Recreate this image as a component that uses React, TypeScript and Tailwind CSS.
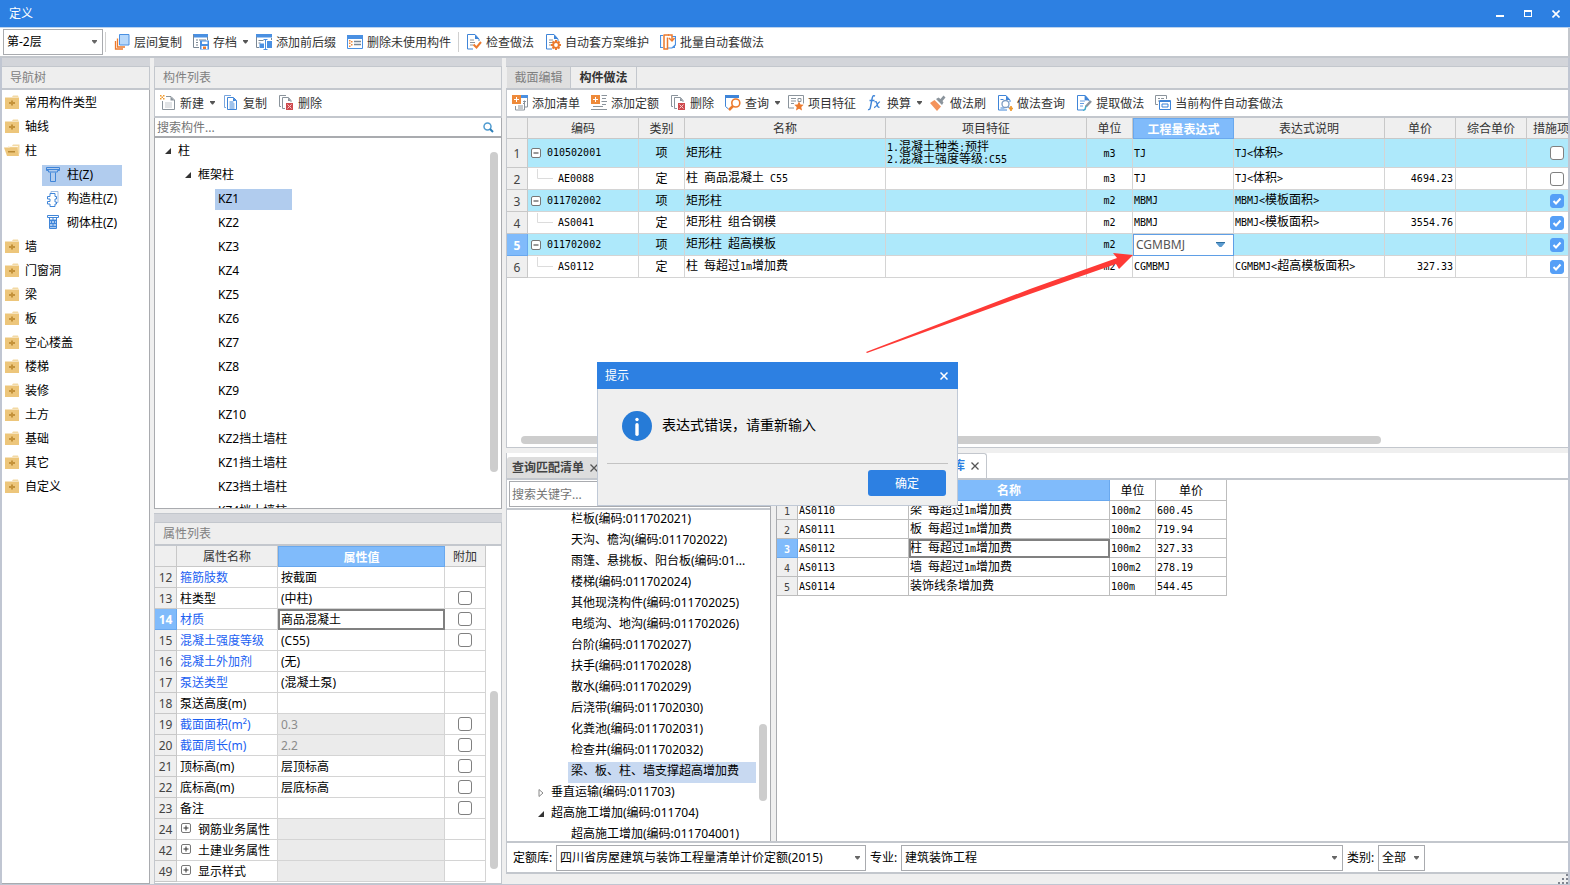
import React from "react";

type Kids = { children?: React.ReactNode };

/* ---------- icons ---------- */

const Svg = ({ children, w = 16, h = 16 }: Kids & { w?: number; h?: number }) => (
  <svg width={w} height={h} viewBox={`0 0 ${w} ${h}`} fill="none" className="shrink-0" aria-hidden="true">
    {children}
  </svg>
);

const Caret = ({ color = "#555" }: { color?: string }) => (
  <svg width="5" height="4" viewBox="0 0 5 4" className="shrink-0" aria-hidden="true">
    <path d="M0 0h5v1L3 3.5H2L0 1z" fill={color} />
  </svg>
);

const FolderClosed = () => (
  <Svg>
    <path d="M8 2 9 .500h5L14.500 2z" fill="#f3d9a3" />
    <path d="M1 2.500h14V14H1z" fill="#edc67b" />
    <path d="M7 5.500h2V7h2v2H9v1.500H7V9H5V7h2z" fill="#c4923a" />
  </Svg>
);

const FolderOpen = () => (
  <Svg>
    <path d="M4 3h4l1-1.500h6.500V10l-1 2z" fill="#f3d9a3" />
    <path d="M5 3h9v1H5z" fill="#fff7e6" />
    <path d="M0 4.500h13L15 13H3z" fill="#edc67b" />
    <path d="M4 8h7v1.500H4z" fill="#b98a35" />
  </Svg>
);

const ColumnIcon = () => (
  <Svg>
    <path d="M1.500.500h13v3h-2v1.500h-9V3.500h-2zM1.500 2.500h13M5.500 5.500v9h5v-9" stroke="#3f85d8" />
  </Svg>
);

const StructColumnIcon = () => (
  <Svg>
    <path d="M6 2.500V.500h7v11h-1" stroke="#9dbbe3" />
    <path d="M5 2.500h5V5.500h1.500v2.500H10V11h1.500v2H10v2.500H5V13H2.500v-2.500H5V8H2.500V5.500H5z" stroke="#3f85d8" />
  </Svg>
);

const BrickColumnIcon = () => (
  <Svg>
    <path d="M4 4h8v9H4z" fill="#a9c8f0" />
    <path d="M2.500.500h11v2h-11zM4.500 3v10.500h7V3M5 5.500h6M5 8.500h6M5 11.500h6M8 3v2M6.500 6v2M9.500 6v2M8 9v2" stroke="#3f85d8" />
  </Svg>
);

const CopyFloors = () => (
  <Svg>
    <path d="M1.500 7v8H9M3.500 4.500V13H11" stroke="#ec7a2e" strokeWidth="1.300" />
    <path d="M5.500.500h9.500v10.500H5.500z" fill="#b7d8fb" stroke="#4a90e2" />
  </Svg>
);

const Archive = () => (
  <Svg>
    <path d="M0 0h15v3.500H0z" fill="#4a90e2" />
    <path d="M.500 1v12.500H6M14.500 3v3M3 6h2M6 6h7M3 8.500h2M3 11h2" stroke="#7a8794" />
    <path d="M7 6.500h9v9H7z" fill="#4a90e2" />
    <path d="M9 7.500h5.500V10H9z" fill="#fff" />
    <path d="M8.500 12h6v3h-6z" fill="#fff" />
    <path d="M10 12.500h3V15h-3z" fill="#ec7a2e" />
  </Svg>
);

const Affix = () => (
  <Svg>
    <path d="M0 0h16v3.500H0z" fill="#4a90e2" />
    <path d="M.500 3v10.500H3M2.500 6.500h5M2.500 9h2M15.500 4v2" stroke="#7a8794" />
    <path d="M3.500 9.500H8V14H3.500zM11 7h5v7h-5z" fill="#4a90e2" />
    <path d="M7.500 5.500h4M9.500 5.500v10M7.500 15.500h4" stroke="#4a90e2" />
  </Svg>
);

const RemoveUnused = () => (
  <Svg>
    <path d="M.500 1.500h15v13H.500z" stroke="#4a90e2" />
    <path d="M0 1h16v4H0z" fill="#4a90e2" />
    <path d="M2 6h1.500v1.500H2zM4 7h1.500v1.500H4zM2 8.500h1.500V10H2zM4 10h1.500v1.500H4zM2 11.500h1.500V13H2z" fill="#ee8a3a" />
    <path d="M7 7.500h7M7 10.500h7" stroke="#7a8794" strokeWidth="1.300" />
  </Svg>
);

const DocBase = () => (
  <>
    <path d="M13 7V5L9 .500H1.500v14.500H7" stroke="#3f85d8" />
    <path d="M9 .500V5h4z" fill="#3f85d8" />
    <path d="M4 6h4M4 8.500h5M4 11h3" stroke="#8b949c" />
  </>
);

const CheckDoc = () => (
  <Svg>
    <DocBase />
    <path d="m7.500 10.500 3 3L15 8" stroke="#ec7a2e" strokeWidth="2" />
  </Svg>
);

const GearDoc = () => (
  <Svg>
    <DocBase />
    <path d="M11 6v10M6 11h10M7.500 7.500l7 7M14.500 7.500l-7 7" stroke="#ec7a2e" strokeWidth="2" />
    <circle cx="11" cy="11" r="3.800" fill="#ec7a2e" />
    <circle cx="11" cy="11" r="1.900" fill="#fff" />
  </Svg>
);

const BatchDocs = () => (
  <Svg>
    <path d="M3 1.500H.500v12H3M12 2.500h3.500v8.500L12 14H8" stroke="#4a90e2" strokeWidth="1.200" />
    <path d="M15 10.500V14h-3.500z" fill="#4a90e2" />
    <path d="M4 1h5M4 .500v14.500h3.500V3.500" stroke="#ec7a2e" strokeWidth="1.500" />
    <path d="M8 1h4v4.500M9 4l3 3 2.500-3" stroke="#ec7a2e" strokeWidth="1.500" />
  </Svg>
);

const NewDoc = () => (
  <Svg>
    <path d="M6 1.500h5l3.500 3.500v9.500h-12V6" stroke="#8b949c" />
    <path d="M10.500 1.500V5.500h4z" fill="#8b949c" />
    <path d="M5 8h7M5 10h7M5 12h7" stroke="#c3c8cd" />
    <path d="M0 0h1.500v1.500H0zM3 0h1.500v1.500H3zM1.500 1.500H3V3H1.500zM0 3h1.500v1.500H0zM3 3h1.500v1.500H3z" fill="#f09a2e" />
  </Svg>
);

const CopyDocs = () => (
  <Svg>
    <path d="M3 12.500H1.500v-12H8" stroke="#7aa6de" />
    <path d="M4.500 2.500h6l3 3v9h-9zM6.500 7h4M6.500 9h5M6.500 11h5M6.500 13h5" stroke="#3f85d8" />
    <path d="M10 2.500V6h3.500z" fill="#3f85d8" />
  </Svg>
);

const DeleteDocs = () => (
  <Svg>
    <path d="M3 11.500H1.500v-11H8M7 13.500H4.500v-11h6l2.500 3V7" stroke="#8b949c" />
    <path d="M10 2.500V6h3z" fill="#8b949c" />
    <path d="M8 8h7v7H8z" fill="#cf4a4e" />
    <path d="m9.500 9.500 4 4M13.500 9.500l-4 4" stroke="#f6cdce" />
  </Svg>
);

const AddList = () => (
  <Svg>
    <path d="M9 0h7v3H9z" fill="#4a90e2" />
    <path d="M15.500 3v9H13M12.500 5.500v9.500H3.500V11M11 6.500h3M11 8.500h1.500M6 11h5M6 13h5" stroke="#8b949c" />
    <path d="M0 0h9v9H0z" fill="#ee8a3a" />
    <path d="M4.500 2v5M2 4.500h5" stroke="#fff" />
  </Svg>
);

const AddQuota = () => (
  <Svg>
    <path d="M10.500.500h5.500M11 3.500h4M10.500 6.500h5.500M11 9.500h4M2 11.500h10M0 14.500h16" stroke="#8b949c" />
    <path d="M0 0h9v9H0z" fill="#ee8a3a" />
    <path d="M4.500 2v5M2 4.500h5" stroke="#fff" />
  </Svg>
);

const Query = () => (
  <Svg>
    <path d="M.500 0v11.500l3 2.500" stroke="#3f85d8" />
    <path d="M0 0h14v3H0z" fill="#3f85d8" />
    <circle cx="10.800" cy="8" r="4" stroke="#ec7a2e" strokeWidth="1.600" />
    <path d="m8 11-4 4" stroke="#ec7a2e" strokeWidth="2.500" />
  </Svg>
);

const Feature = () => (
  <Svg>
    <path d="M.500.500h15v8M.500.500v12.500H6M3 3.500h5M3 6h5M3 8.500h3M10 3.500h3v3h-3z" stroke="#8b949c" />
    <path d="m11 6.500 1.500 3 3.200.3-2.400 2.200.7 3.500-3-1.700-3 1.700.7-3.500-2.400-2.200 3.200-.3z" fill="#ec7a2e" />
  </Svg>
);

const Fx = () => (
  <Svg>
    <path d="M8 1C6 0 5.500 1.500 5 4L3.500 12c-.5 2.500-1 3-2.500 2.500M2.500 5.500h5" stroke="#3f85d8" strokeWidth="1.400" />
    <path d="M7.500 7c2-1 2 0 2.500 2s1 4 2.500 3M13 7c-2-.5-3.500 6-6 5.500" stroke="#3f85d8" strokeWidth="1.300" />
  </Svg>
);

const Brush = () => (
  <Svg>
    <path d="m0 8 4.500-3 6.500 6.500L7 16z" fill="#f4935c" />
    <path d="m5 4 7 7" stroke="#fff" />
    <path d="M6 4 8.500 2.500l2 1.500L13.500.500l2 2-3 3.500 1 1.500-1.500 2.500z" fill="#8b949c" />
  </Svg>
);

const MethodQuery = () => (
  <Svg>
    <path d="M13 7V5L9 .500H1.500v14.500H10M3.500 4.500h3M3.500 13h4" stroke="#3f85d8" />
    <path d="M9 .500V5h4z" fill="#3f85d8" />
    <circle cx="8.500" cy="9" r="3.500" stroke="#7d9cc4" strokeWidth="1.300" />
    <path d="m11 11.500 1.500 1.500" stroke="#7d9cc4" strokeWidth="1.500" />
    <path d="m14 11 .7 1.800 1.300.7-1.300.7L14 16l-.7-1.800-1.300-.7 1.300-.7z" fill="#f09a2e" stroke="#f09a2e" />
  </Svg>
);

const Extract = () => (
  <Svg>
    <path d="M13 6V5L9 .500H1.500v14.500H7" stroke="#3f85d8" />
    <path d="M9 .500V5h4zM4 6h5M4 8.500h4M4 11h3" fill="#3f85d8" stroke="#3f85d8" strokeWidth=".8" />
    <path d="m15 6-5 5.500" stroke="#8b949c" strokeWidth="2.500" />
    <path d="m10 11-1 3.500-2 1" stroke="#3fa9c9" strokeWidth="1.500" />
  </Svg>
);

const AutoApply = () => (
  <Svg>
    <path d="M3 9.500H.500V.500h11V4M3 3.500h2M6 3.500h3M3 6h1" stroke="#8b949c" />
    <path d="M4.500 5.500h11v9h-11z" fill="#fff" stroke="#3f85d8" />
    <path d="M5 6.500h10M7 9h6v3H7z" stroke="#3f85d8" />
  </Svg>
);

const SearchIcon = () => (
  <Svg w={12} h={12}>
    <circle cx="5.500" cy="5.500" r="3.500" stroke="#4f9bd0" strokeWidth="1.500" />
    <path d="m8 8 3 3" stroke="#2d7fb8" strokeWidth="2" />
  </Svg>
);

const TreeOpen = () => (
  <Svg w={8} h={8}>
    <path d="M7 1v6H1z" fill="#333" />
  </Svg>
);

const TreeClosed = () => (
  <Svg w={8} h={10}>
    <path d="M2 1.500v7L6 5z" stroke="#888" />
  </Svg>
);

const Cross = ({ size = 8, color = "#fff", weight = 1.5 }: { size?: number; color?: string; weight?: number }) => (
  <svg width={size} height={size} viewBox="0 0 8 8" fill="none" aria-hidden="true">
    <path d="m.5.5 7 7m0-7-7 7" stroke={color} strokeWidth={weight} />
  </svg>
);

const ExpandBox = ({ plus = false }: { plus?: boolean }) => (
  <Svg w={12} h={12}>
    <rect x="1.500" y="1.500" width="9" height="9" rx="1.500" fill="#fff" stroke="#777" />
    <path d={plus ? "M3.500 6h5M6 3.500v5" : "M3.500 6h5"} stroke="#333" />
  </Svg>
);

/* ---------- shared parts ---------- */

const ToolButton = ({ icon, label, menu = false }: { icon: React.ReactNode; label: string; menu?: boolean }) => (
  <button type="button" className={`flex h-6 shrink-0 items-center pl-[5px] text-[#333] ${menu ? "pr-0.5" : "pr-[5px]"}`}>
    <span className="flex w-5 shrink-0">{icon}</span>
    <span className="pt-0.5 whitespace-nowrap">{label}</span>
    {menu && (
      <span className="ml-1.5">
        <Caret />
      </span>
    )}
  </button>
);

const PaneTop = ({ children, sides = "" }: Kids & { sides?: string }) => (
  <>
    <div className="h-2 shrink-0 bg-[#d3d5da]" />
    <div className={`flex h-6 shrink-0 border-t border-b-2 border-[#c3c7cd] bg-[#eeeeee] ${sides}`}>{children}</div>
  </>
);

const PaneTitle = ({ children }: Kids) => <h2 className="px-2 pt-px leading-5 text-[#808080]">{children}</h2>;

const Tick = ({ label, checked = false }: { label: string; checked?: boolean }) => (
  <span className="relative mx-auto flex w-3.5">
    <input
      type="checkbox"
      aria-label={label}
      defaultChecked={checked}
      className="peer h-3.5 w-3.5 appearance-none rounded-[3px] border border-[#808080] bg-white checked:border-[#559ff7] checked:bg-[#559ff7]"
    />
    <svg viewBox="0 0 14 14" className="pointer-events-none absolute inset-0 hidden h-3.5 w-3.5 peer-checked:block" fill="none" aria-hidden="true">
      <path d="m3.500 7 2.500 2.500L10.500 4.500" stroke="#fff" strokeWidth="2" />
    </svg>
  </span>
);

/* Grid text: half-width characters sit on a six pixel pitch beside twelve pixel ideographs. */
const GridText = ({ children }: { children: string }) => (
  <>
    {children.split(/([\x20-\x7e]+)/).map((run, i) =>
      i % 2 ? (
        <span key={i} className="font-['DejaVu_Sans_Mono',monospace] text-[10px] whitespace-pre">
          {run}
        </span>
      ) : (
        run
      ),
    )}
  </>
);

const Dropdown = ({ id, value, className }: { id: string; value: string; className: string }) => (
  <span className={`relative flex h-[26px] ${className}`}>
    <select id={id} aria-label={value} className="w-full appearance-none border border-[#a9abaf] bg-white pr-4 pl-[3px] text-black">
      <option>{value}</option>
    </select>
    <span className="pointer-events-none absolute inset-y-0 right-1.5 flex items-center">
      <Caret color="#666" />
    </span>
  </span>
);

/* ---------- navigation ---------- */

const navAfter = ["墙", "门窗洞", "梁", "板", "空心楼盖", "楼梯", "装修", "土方", "基础", "其它", "自定义"];

const NavRow = ({ label, open = false }: { label: string; open?: boolean }) => (
  <li className="flex h-6 items-center pl-0.5">
    <span className="flex w-[21px]">{open ? <FolderOpen /> : <FolderClosed />}</span>
    {label}
  </li>
);

const NavChild = ({ label, icon, active = false }: { label: string; icon: React.ReactNode; active?: boolean }) => (
  <li className="flex h-6 items-center pl-10">
    <span className={`flex h-[21px] w-20 items-center pl-[3px] whitespace-nowrap ${active ? "bg-[#b1ccee]" : ""}`}>
      <span className="flex w-[22px] shrink-0">{icon}</span>
      {label}
    </span>
  </li>
);

const NavPane = () => (
  <nav className="flex w-[148px] shrink-0 flex-col">
    <PaneTop sides="border-r">
      <PaneTitle>导航树</PaneTitle>
    </PaneTop>
    <ul className="flex-1 border-r border-b border-[#a9abaf] bg-white pt-px">
      <NavRow label="常用构件类型" />
      <NavRow label="轴线" />
      <NavRow label="柱" open />
      <NavChild label="柱(Z)" icon={<ColumnIcon />} active />
      <NavChild label="构造柱(Z)" icon={<StructColumnIcon />} />
      <NavChild label="砌体柱(Z)" icon={<BrickColumnIcon />} />
      {navAfter.map((label) => (
        <NavRow key={label} label={label} />
      ))}
    </ul>
  </nav>
);

/* ---------- component list and properties ---------- */

const components = ["KZ1", "KZ2", "KZ3", "KZ4", "KZ5", "KZ6", "KZ7", "KZ8", "KZ9", "KZ10", "KZ2挡土墙柱", "KZ1挡土墙柱", "KZ3挡土墙柱", "KZ4挡土墙柱"];

const ComponentPane = () => (
  <section className="flex min-h-0 flex-1 flex-col">
    <PaneTop sides="border-x">
      <PaneTitle>构件列表</PaneTitle>
    </PaneTop>
    <div className="flex h-7 shrink-0 items-center gap-px border-x border-b-2 border-[#c3c7cd] bg-white">
      <ToolButton icon={<NewDoc />} label="新建" menu />
      <ToolButton icon={<CopyDocs />} label="复制" />
      <ToolButton icon={<DeleteDocs />} label="删除" />
    </div>
    <div className="flex h-5 shrink-0 items-center border-x border-b-2 border-[#a9abaf] bg-white pr-[7px]">
      <input aria-label="搜索构件" placeholder="搜索构件..." className="min-w-0 flex-1 pt-0.5 pl-0.5 outline-none placeholder:text-[#757575]" />
      <SearchIcon />
    </div>
    <div className="flex min-h-0 flex-1 overflow-hidden border-x border-b border-[#a9abaf] bg-white">
      <ul className="flex-1 pt-px">
        <li className="flex h-6 items-center pl-[9px]">
          <span className="flex w-[14px]">
            <TreeOpen />
          </span>
          柱
        </li>
        <li className="flex h-6 items-center pl-[29px]">
          <span className="flex w-[14px]">
            <TreeOpen />
          </span>
          框架柱
        </li>
        {components.map((name, i) => (
          <li key={name} className="flex h-6 items-center pl-[60px]">
            <span className={`h-[21px] w-[77px] pl-[3px] leading-5 whitespace-nowrap ${i === 0 ? "bg-[#b1ccee]" : ""}`}>{name}</span>
          </li>
        ))}
      </ul>
      <div className="w-[11px] pt-3.5">
        <div className="h-80 w-2 rounded-full bg-[#cdcdcd]" />
      </div>
    </div>
  </section>
);

type Prop = { n: number; name: string; value?: string; blue?: boolean; tick?: boolean; grey?: boolean; group?: boolean; active?: boolean };

const props: Prop[] = [
  { n: 12, name: "箍筋肢数", value: "按截面", blue: true },
  { n: 13, name: "柱类型", value: "(中柱)", tick: true },
  { n: 14, name: "材质", value: "商品混凝土", blue: true, tick: true, active: true },
  { n: 15, name: "混凝土强度等级", value: "(C55)", blue: true, tick: true },
  { n: 16, name: "混凝土外加剂", value: "(无)", blue: true },
  { n: 17, name: "泵送类型", value: "(混凝土泵)", blue: true },
  { n: 18, name: "泵送高度(m)" },
  { n: 19, name: "截面面积(m²)", value: "0.3", blue: true, tick: true, grey: true },
  { n: 20, name: "截面周长(m)", value: "2.2", blue: true, tick: true, grey: true },
  { n: 21, name: "顶标高(m)", value: "层顶标高", tick: true },
  { n: 22, name: "底标高(m)", value: "层底标高", tick: true },
  { n: 23, name: "备注", tick: true },
  { n: 24, name: "钢筋业务属性", grey: true, group: true },
  { n: 42, name: "土建业务属性", grey: true, group: true },
  { n: 49, name: "显示样式", grey: true, group: true },
];

const PropertyPane = () => (
  <section className="flex shrink-0 flex-col border-t border-[#c3c7cd]">
    <PaneTop sides="border-x">
      <PaneTitle>属性列表</PaneTitle>
    </PaneTop>
    <div className="flex justify-between border-x border-b border-[#c3c7cd] bg-white pb-px">
      <table className="w-[331px] table-fixed border-separate border-spacing-0">
        <colgroup>
          <col className="w-[22px]" />
          <col className="w-[101px]" />
          <col className="w-[167px]" />
          <col className="w-[41px]" />
        </colgroup>
        <thead>
          <tr className="h-[21px]">
            <th className="border-r border-b border-[#c8c8c8] bg-[#efefef] p-0" />
            <th className="border-r border-b border-[#c8c8c8] bg-[#efefef] p-0 pt-0.5 font-normal text-[#333]">属性名称</th>
            <th className="border border-[#69a8ee] bg-[#80bbfb] p-0 pt-0.5 text-white">属性值</th>
            <th className="border-r border-b border-[#c8c8c8] bg-[#efefef] p-0 pt-0.5 font-normal text-[#333]">附加</th>
          </tr>
        </thead>
        <tbody>
          {props.map((p) => (
            <tr key={p.n} className="h-[21px]">
              <td className={`border-r border-b p-0 pt-0.5 text-center ${p.active ? "border-[#69a8ee] bg-[#80bbfb] font-bold text-white" : "border-[#c8c8c8] bg-[#efefef] text-[#444]"}`}>{p.n}</td>
              <td className={`border-r border-b border-[#d4d4d4] p-0 pt-0.5 pl-[3px] whitespace-nowrap ${p.blue ? "text-[#1c5ff2]" : "text-black"}`}>
                {p.group ? (
                  <span className="flex items-start gap-1.5">
                    <ExpandBox plus />
                    {p.name}
                  </span>
                ) : (
                  p.name
                )}
              </td>
              <td
                className={`border-r border-b border-[#d4d4d4] p-0 pt-0.5 pl-[3px] ${p.grey ? "bg-[#ebebeb] text-[#8c8c8c]" : "text-black"} ${p.active ? "outline-2 -outline-offset-2 outline-[#808080]" : ""}`}
              >
                {p.value}
              </td>
              <td className="border-r border-b border-[#d4d4d4] p-0">{p.tick && <Tick label={`${p.name} 附加`} />}</td>
            </tr>
          ))}
        </tbody>
      </table>
      <div className="w-[11px] pt-[145px]">
        <div className="h-[178px] w-2 rounded-full bg-[#cdcdcd]" />
      </div>
    </div>
  </section>
);

/* ---------- bill grid ---------- */

type Bill = { code: string; kind: string; name: string; feature?: string[]; unit: string; expr: string; note?: string; price?: string; on?: boolean };

const bills: Bill[] = [
  { code: "010502001", kind: "项", name: "矩形柱", feature: ["1.混凝土种类:预拌", "2.混凝土强度等级:C55"], unit: "m3", expr: "TJ", note: "TJ<体积>" },
  { code: "AE0088", kind: "定", name: "柱 商品混凝土 C55", unit: "m3", expr: "TJ", note: "TJ<体积>", price: "4694.23" },
  { code: "011702002", kind: "项", name: "矩形柱", unit: "m2", expr: "MBMJ", note: "MBMJ<模板面积>", on: true },
  { code: "AS0041", kind: "定", name: "矩形柱 组合钢模", unit: "m2", expr: "MBMJ", note: "MBMJ<模板面积>", price: "3554.76", on: true },
  { code: "011702002", kind: "项", name: "矩形柱 超高模板", unit: "m2", expr: "CGMBMJ", on: true },
  { code: "AS0112", kind: "定", name: "柱 每超过1m增加费", unit: "m2", expr: "CGMBMJ", note: "CGMBMJ<超高模板面积>", price: "327.33", on: true },
];

const billHeads = ["", "编码", "类别", "名称", "项目特征", "单位", "工程量表达式", "表达式说明", "单价", "综合单价", "措施项目"];
const cell = "border-r border-b border-[#d4d4d4] p-0 px-0.5 whitespace-nowrap leading-4";
const exprCell = "border-r border-b border-[#d4d4d4] p-0 px-px whitespace-nowrap leading-4";

const BillGrid = () => (
  <table className="w-[1081px] table-fixed border-separate border-spacing-0 text-black">
    <colgroup>
      <col className="w-[21px]" />
      <col className="w-[111px]" />
      <col className="w-[46px]" />
      <col className="w-[201px]" />
      <col className="w-[201px]" />
      <col className="w-[46px]" />
      <col className="w-[101px]" />
      <col className="w-[151px]" />
      <col className="w-[71px]" />
      <col className="w-[71px]" />
      <col className="w-[61px]" />
    </colgroup>
    <thead>
      <tr className="h-[21px]">
        {billHeads.map((h, i) => (
          <th key={i} className={`p-0 pt-0.5 ${i === 6 ? "border border-[#69a8ee] bg-[#80bbfb] text-white" : "border-r border-b border-[#c8c8c8] bg-[#efefef] font-normal text-[#333]"}`}>
            {h}
          </th>
        ))}
      </tr>
    </thead>
    <tbody>
      {bills.map((b, i) => {
        const item = b.kind === "项";
        const editing = i === 4;
        return (
          <tr key={i} className={`${i === 0 ? "h-[29px]" : "h-[22px]"} ${item ? "bg-[#aee9fb]" : "bg-white"}`}>
            <td className={`border-r border-b p-0 pt-0.5 text-center ${editing ? "border-[#69a8ee] bg-[#80bbfb] font-bold text-white" : "border-[#c8c8c8] bg-[#efefef] text-[#444]"}`}>{i + 1}</td>
            <td className={cell}>
              {item ? (
                <span className="flex items-center gap-[5px]">
                  <ExpandBox />
                  <GridText>{b.code}</GridText>
                </span>
              ) : (
                <span className="flex items-center gap-1">
                  <svg width="24" height="20" viewBox="0 0 24 20" fill="none" aria-hidden="true">
                    <path d="M7.500 0v9.500H23" stroke="#dcdcdc" />
                  </svg>
                  <GridText>{b.code}</GridText>
                </span>
              )}
            </td>
            <td className={`${cell} text-center`}>{b.kind}</td>
            <td className={exprCell}>
              <GridText>{b.name}</GridText>
            </td>
            <td className={exprCell}>
              {b.feature?.map((line) => (
                <div key={line} className="h-3 leading-3">
                  <GridText>{line}</GridText>
                </div>
              ))}
            </td>
            <td className={`${cell} text-center`}>
              <GridText>{b.unit}</GridText>
            </td>
            {editing ? (
              <td className="p-0">
                <span className="relative flex">
                  <select aria-label="工程量表达式" className="h-[22px] w-full appearance-none border border-[#5f9fe6] bg-white pl-0.5 text-[#555]">
                    <option>{b.expr}</option>
                  </select>
                  <svg width="9" height="6" viewBox="0 0 9 6" className="pointer-events-none absolute top-2 right-[9px]" aria-hidden="true">
                    <path d="M0 0h9v1L5.500 5h-2L0 1z" fill="#5b9bd0" />
                    <path d="M0 0h9v1H0z" fill="#2f6f9f" />
                  </svg>
                </span>
              </td>
            ) : (
              <td className={exprCell}>
                <GridText>{b.expr}</GridText>
              </td>
            )}
            <td className={exprCell}>{b.note && <GridText>{b.note}</GridText>}</td>
            <td className={`${cell} text-right`}>{b.price && <GridText>{b.price}</GridText>}</td>
            <td className={cell} />
            <td className={cell}>
              <Tick label={`${b.code} 措施项目`} checked={b.on} />
            </td>
          </tr>
        );
      })}
    </tbody>
  </table>
);

const MethodPane = () => (
  <section className="flex min-h-0 flex-1 flex-col">
    <PaneTop>
      <div role="tablist" className="flex pl-px leading-5">
        <button type="button" role="tab" className="w-16 border-r border-[#c3c7cd] bg-[#dfdfdf] text-[#808080]">
          截面编辑
        </button>
        <button type="button" role="tab" aria-selected="true" className="w-[66px] border-r border-[#c3c7cd] font-bold text-[#333]">
          构件做法
        </button>
      </div>
    </PaneTop>
    <div className="flex h-7 shrink-0 items-center gap-px border-b-2 border-l border-[#c3c7cd] bg-white">
      <ToolButton icon={<AddList />} label="添加清单" />
      <ToolButton icon={<AddQuota />} label="添加定额" />
      <ToolButton icon={<DeleteDocs />} label="删除" />
      <ToolButton icon={<Query />} label="查询" menu />
      <ToolButton icon={<Feature />} label="项目特征" />
      <ToolButton icon={<Fx />} label="换算" menu />
      <ToolButton icon={<Brush />} label="做法刷" />
      <ToolButton icon={<MethodQuery />} label="做法查询" />
      <ToolButton icon={<Extract />} label="提取做法" />
      <ToolButton icon={<AutoApply />} label="当前构件自动套做法" />
    </div>
    <div className="flex min-h-0 flex-1 flex-col justify-between overflow-hidden border-b border-l border-[#c3c7cd] bg-white pb-[3px]">
      <BillGrid />
      <div className="mr-[187px] ml-3.5 h-2 rounded-full bg-[#cdcdcd]" />
    </div>
  </section>
);

/* ---------- query area ---------- */

const leaves = [
  "栏板(编码:011702021)",
  "天沟、檐沟(编码:011702022)",
  "雨篷、悬挑板、阳台板(编码:01...",
  "楼梯(编码:011702024)",
  "其他现浇构件(编码:011702025)",
  "电缆沟、地沟(编码:011702026)",
  "台阶(编码:011702027)",
  "扶手(编码:011702028)",
  "散水(编码:011702029)",
  "后浇带(编码:011702030)",
  "化粪池(编码:011702031)",
  "检查井(编码:011702032)",
  "梁、板、柱、墙支撑超高增加费",
];

const quotas = [
  ["AS0110", "梁 每超过1m增加费", "100m2", "600.45"],
  ["AS0111", "板 每超过1m增加费", "100m2", "719.94"],
  ["AS0112", "柱 每超过1m增加费", "100m2", "327.33"],
  ["AS0113", "墙 每超过1m增加费", "100m2", "278.19"],
  ["AS0114", "装饰线条增加费", "100m", "544.45"],
];

const ChapterTree = () => (
  <div className="flex w-[264px] shrink-0 flex-col border-r border-[#a9abaf] bg-white">
    <div className="flex h-[30px] shrink-0 border-b-2 border-[#c3c7cd] py-px pl-0.5">
      <input aria-label="搜索关键字" placeholder="搜索关键字..." className="h-[26px] w-full border border-[#a9abaf] pl-0.5 outline-none placeholder:text-[#757575]" />
    </div>
    <div className="flex min-h-0 flex-1 overflow-hidden">
      <ul className="min-w-0 flex-1 leading-[18px]">
        {leaves.map((t, i) => (
          <li key={t} className="flex h-[21px] pl-[61px]">
            <span className={`w-[188px] pl-[3px] whitespace-nowrap ${i === 12 ? "bg-[#c8d9f1]" : ""}`}>{t}</span>
          </li>
        ))}
        <li className="flex h-[21px] items-center pb-[3px] pl-[30px]">
          <span className="flex w-3.5 pt-0.5">
            <TreeClosed />
          </span>
          垂直运输(编码:011703)
        </li>
        <li className="flex h-[21px] items-center pb-[3px] pl-[30px]">
          <span className="flex w-3.5 pt-0.5">
            <TreeOpen />
          </span>
          超高施工增加(编码:011704)
        </li>
        <li className="h-[21px] pl-16">超高施工增加(编码:011704001)</li>
      </ul>
      <div className="w-[11px] pt-[214px]">
        <div className="h-[77px] w-2 rounded-full bg-[#cdcdcd]" />
      </div>
    </div>
  </div>
);

const QuotaTable = () => (
  <table className="w-[450px] table-fixed border-separate border-spacing-0 text-black">
    <colgroup>
      <col className="w-[21px]" />
      <col className="w-[111px]" />
      <col className="w-[201px]" />
      <col className="w-[46px]" />
      <col className="w-[71px]" />
    </colgroup>
    <thead>
      <tr className="h-[21px]">
        {["", "编码", "名称", "单位", "单价"].map((h, i) => (
          <th key={i} className={`border-r border-b p-0 pt-0.5 ${i === 2 ? "border-[#69a8ee] bg-[#80bbfb] text-white" : "border-[#bdbdbd] bg-white font-normal"}`}>
            {h}
          </th>
        ))}
      </tr>
    </thead>
    <tbody>
      {quotas.map((row, i) => (
        <tr key={row[0]} className="h-[19px]">
          <td className={`border-r border-b p-0 pt-0.5 text-center leading-3 ${i === 2 ? "border-[#69a8ee] bg-[#80bbfb] font-bold text-white" : "border-[#bdbdbd] bg-[#efefef] text-[#444]"}`}>
            <GridText>{String(i + 1)}</GridText>
          </td>
          {row.map((v, c) => (
            <td
              key={c}
              className={`border-r border-b border-[#bdbdbd] p-0 pl-px leading-4 whitespace-nowrap ${i === 2 && c === 1 ? "outline-2 -outline-offset-2 outline-[#808080]" : ""}`}
            >
              <GridText>{v}</GridText>
            </td>
          ))}
        </tr>
      ))}
    </tbody>
  </table>
);

const QueryPane = () => (
  <section className="flex h-[421px] shrink-0 flex-col border-b-2 border-l border-[#c3c7cd]">
    <div className="flex h-[27px] shrink-0 items-end border-b-2 border-[#c3c7cd] bg-white font-bold">
      <div className="flex h-[21px] items-center gap-1.5 rounded-t-[3px] bg-[#dddddd] pr-2 pl-[5px] text-[#444]">
        查询匹配清单
        <button type="button" aria-label="关闭查询匹配清单">
          <Cross color="#555" weight={1.3} />
        </button>
      </div>
      <div className="ml-[294px] flex h-[25px] items-center gap-1.5 rounded-t-[3px] border-x border-t border-[#c3c7cd] bg-white pr-[7px] pl-1 text-[#2d80e2]">
        查询定额库
        <button type="button" aria-label="关闭查询定额库">
          <Cross color="#555" weight={1.3} />
        </button>
      </div>
    </div>
    <div className="flex min-h-0 flex-1">
      <ChapterTree />
      <div className="w-[5px] shrink-0" />
      <div className="min-w-0 flex-1 border-l border-[#a9abaf] bg-white">
        <QuotaTable />
      </div>
    </div>
    <div className="flex h-[31px] shrink-0 items-center border-t-2 border-[#c3c7cd] bg-white pl-1.5 whitespace-nowrap">
      <label htmlFor="library" className="w-[43px]">
        定额库:
      </label>
      <Dropdown id="library" value="四川省房屋建筑与装饰工程量清单计价定额(2015)" className="w-[310px]" />
      <label htmlFor="major" className="ml-1 w-[31px]">
        专业:
      </label>
      <Dropdown id="major" value="建筑装饰工程" className="w-[442px]" />
      <label htmlFor="kind" className="ml-1 w-[31px]">
        类别:
      </label>
      <Dropdown id="kind" value="全部" className="w-[47px]" />
    </div>
  </section>
);

/* ---------- dialog and pointer ---------- */

const MessageDialog = () => (
  <div role="alertdialog" aria-labelledby="dlg-title" aria-describedby="dlg-text" className="absolute top-[362px] left-[597px] flex h-36 w-[361px] flex-col border border-[#c0c9d6] bg-[#efefef]">
    <div className="-mx-px -mt-px flex h-[27px] shrink-0 items-center justify-between bg-[#2d80e2] pr-2.5 pl-2 text-white">
      <h2 id="dlg-title">提示</h2>
      <button type="button" aria-label="关闭">
        <Cross />
      </button>
    </div>
    <div className="flex flex-1 items-center gap-2.5 pl-6">
      <svg width="30" height="30" viewBox="0 0 30 30" aria-hidden="true">
        <circle cx="15" cy="15" r="15" fill="#267bd7" />
        <circle cx="15" cy="8.500" r="1.700" fill="#fff" />
        <rect x="13.300" y="12" width="3.400" height="13" rx="1.700" fill="#fff" />
      </svg>
      <p id="dlg-text" className="pb-0.5 text-[14px] text-black">
        表达式错误，请重新输入
      </p>
    </div>
    <div className="mx-[9px] flex h-[42px] shrink-0 items-start justify-end border-t border-[#c3c3c3] pt-1.5 pr-0.5">
      <button type="button" className="h-[26px] w-[78px] rounded-[3px] bg-[#2d80e2] pt-0.5 text-white">
        确定
      </button>
    </div>
  </div>
);

const PointerArrow = () => (
  <svg width="270" height="104" viewBox="0 0 270 104" className="pointer-events-none absolute top-[251px] left-[865px]" aria-hidden="true">
    <path d="M1 101 165 38 252 7 248 2 268 4 254 18 251 13 165 43 2 102z" fill="#fe3a36" />
  </svg>
);

/* ---------- window ---------- */

const TitleBar = () => (
  <header className="flex h-7 shrink-0 items-center justify-between border-b border-[#bcd3ee] bg-[#2d80e2] pr-2.5 pl-[9px] text-white">
    <h1>定义</h1>
    <div className="flex items-center gap-5">
      <button type="button" aria-label="最小化">
        <svg width="8" height="8" viewBox="0 0 8 8">
          <path d="M0 5h8v2H0z" fill="#fff" />
        </svg>
      </button>
      <button type="button" aria-label="最大化">
        <svg width="8" height="8" viewBox="0 0 8 8">
          <path d="M0 0h8v7H0zm1 2v4h6V2z" fill="#fff" fillRule="evenodd" />
        </svg>
      </button>
      <button type="button" aria-label="关闭窗口">
        <Cross weight={1.6} />
      </button>
    </div>
  </header>
);

const MainToolbar = () => (
  <div className="flex h-[30px] shrink-0 items-center gap-px border-r-2 border-b-2 border-[#c3c7cd] bg-white pl-[3px]">
    <Dropdown id="floor" value="第-2层" className="w-[100px] shrink-0" />
    <div className="mr-0.5 ml-px h-5 w-px bg-[#d0d0d0]" />
    <ToolButton icon={<CopyFloors />} label="层间复制" />
    <ToolButton icon={<Archive />} label="存档" menu />
    <ToolButton icon={<Affix />} label="添加前后缀" />
    <ToolButton icon={<RemoveUnused />} label="删除未使用构件" />
    <div className="mx-px h-5 w-px bg-[#d0d0d0]" />
    <ToolButton icon={<CheckDoc />} label="检查做法" />
    <ToolButton icon={<GearDoc />} label="自动套方案维护" />
    <ToolButton icon={<BatchDocs />} label="批量自动套做法" />
  </div>
);

const Grip = () => (
  <Svg w={10} h={10}>
    <path d="M8 0h2v2H8zM4 4h2v2H4zM8 4h2v2H8zM0 8h2v2H0zM4 8h2v2H4zM8 8h2v2H8z" fill="#808590" />
  </Svg>
);

export default function App() {
  return (
    <div className="relative flex h-screen flex-col overflow-hidden bg-[#efefef] font-['Noto_Sans','Noto_Sans_CJK_SC',sans-serif] text-[12px] leading-4 text-black">
      <TitleBar />
      <MainToolbar />
      <div className="flex min-h-0 flex-1 border-x-2 border-b border-[#c0c6d2]">
        <NavPane />
        <div className="w-1 shrink-0" />
        <div className="flex w-[348px] shrink-0 flex-col">
          <ComponentPane />
          <div className="h-1 shrink-0" />
          <PropertyPane />
        </div>
        <div className="w-1 shrink-0" />
        <main className="flex min-w-0 flex-1 flex-col">
          <MethodPane />
          <div className="h-[5px] shrink-0" />
          <QueryPane />
          <div className="flex h-2.5 shrink-0 justify-end">
            <Grip />
          </div>
        </main>
      </div>
      <PointerArrow />
      <MessageDialog />
    </div>
  );
}
